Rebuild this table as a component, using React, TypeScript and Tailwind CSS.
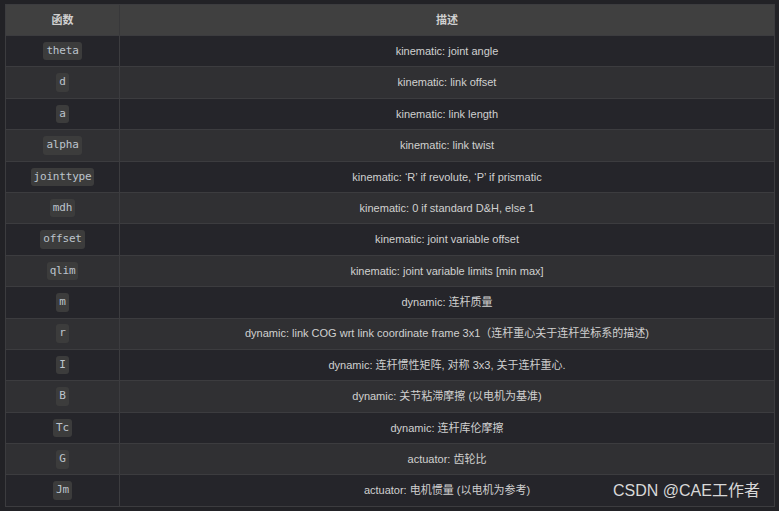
const rows: [string, string][] = [
  ['theta', 'kinematic: joint angle'],
  ['d', 'kinematic: link offset'],
  ['a', 'kinematic: link length'],
  ['alpha', 'kinematic: link twist'],
  ['jointtype', 'kinematic: ‘R’ if revolute, ‘P’ if prismatic'],
  ['mdh', 'kinematic: 0 if standard D&H, else 1'],
  ['offset', 'kinematic: joint variable offset'],
  ['qlim', 'kinematic: joint variable limits [min max]'],
  ['m', 'dynamic: 连杆质量'],
  ['r', 'dynamic: link COG wrt link coordinate frame 3x1（连杆重心关于连杆坐标系的描述)'],
  ['I', 'dynamic: 连杆惯性矩阵, 对称 3x3, 关于连杆重心.'],
  ['B', 'dynamic: 关节粘滞摩擦 (以电机为基准)'],
  ['Tc', 'dynamic: 连杆库伦摩擦'],
  ['G', 'actuator: 齿轮比'],
  ['Jm', 'actuator: 电机惯量 (以电机为参考)'],
];

export default function App() {
  return (
    <div className="relative w-[779px] h-[511px] bg-[#222226] pt-[4px] pl-[5px] font-['Liberation_Sans','Noto_Sans_CJK_SC',sans-serif]">
      <div className="w-[770px] border border-[#3c3c3f] text-[11px] text-[#d0d0d0]">
        {/* header */}
        <div className="flex h-[30px] bg-[#404040] font-bold">
          <div className="w-[114px] flex items-center justify-center border-r border-[#38383a]">函数</div>
          <div className="flex-1 flex items-center justify-center">描述</div>
        </div>
        {rows.map(([name, desc], i) => (
          <div
            key={name}
            className={`flex h-[31.4px] border-t border-[#3c3c3f] ${i % 2 === 0 ? 'bg-[#25252a]' : 'bg-[#303033]'}`}
          >
            <div className="w-[114px] flex items-center justify-center border-r border-[#3c3c3f]">
              <code className="px-[3px] py-[1px] rounded-[3px] bg-[#3c3c3c] text-[#bcc4cc] text-[11px] tracking-[-0.2px] font-['DejaVu_Sans_Mono',monospace]">
                {name}
              </code>
            </div>
            <div className="flex-1 flex items-center justify-center">{desc}</div>
          </div>
        ))}
      </div>
      <div className="absolute left-[613px] top-[479px] text-[16px] text-[#d8d8d8] font-['Liberation_Sans','Noto_Sans_CJK_SC',sans-serif]">
        CSDN @CAE工作者
      </div>
    </div>
  );
}
